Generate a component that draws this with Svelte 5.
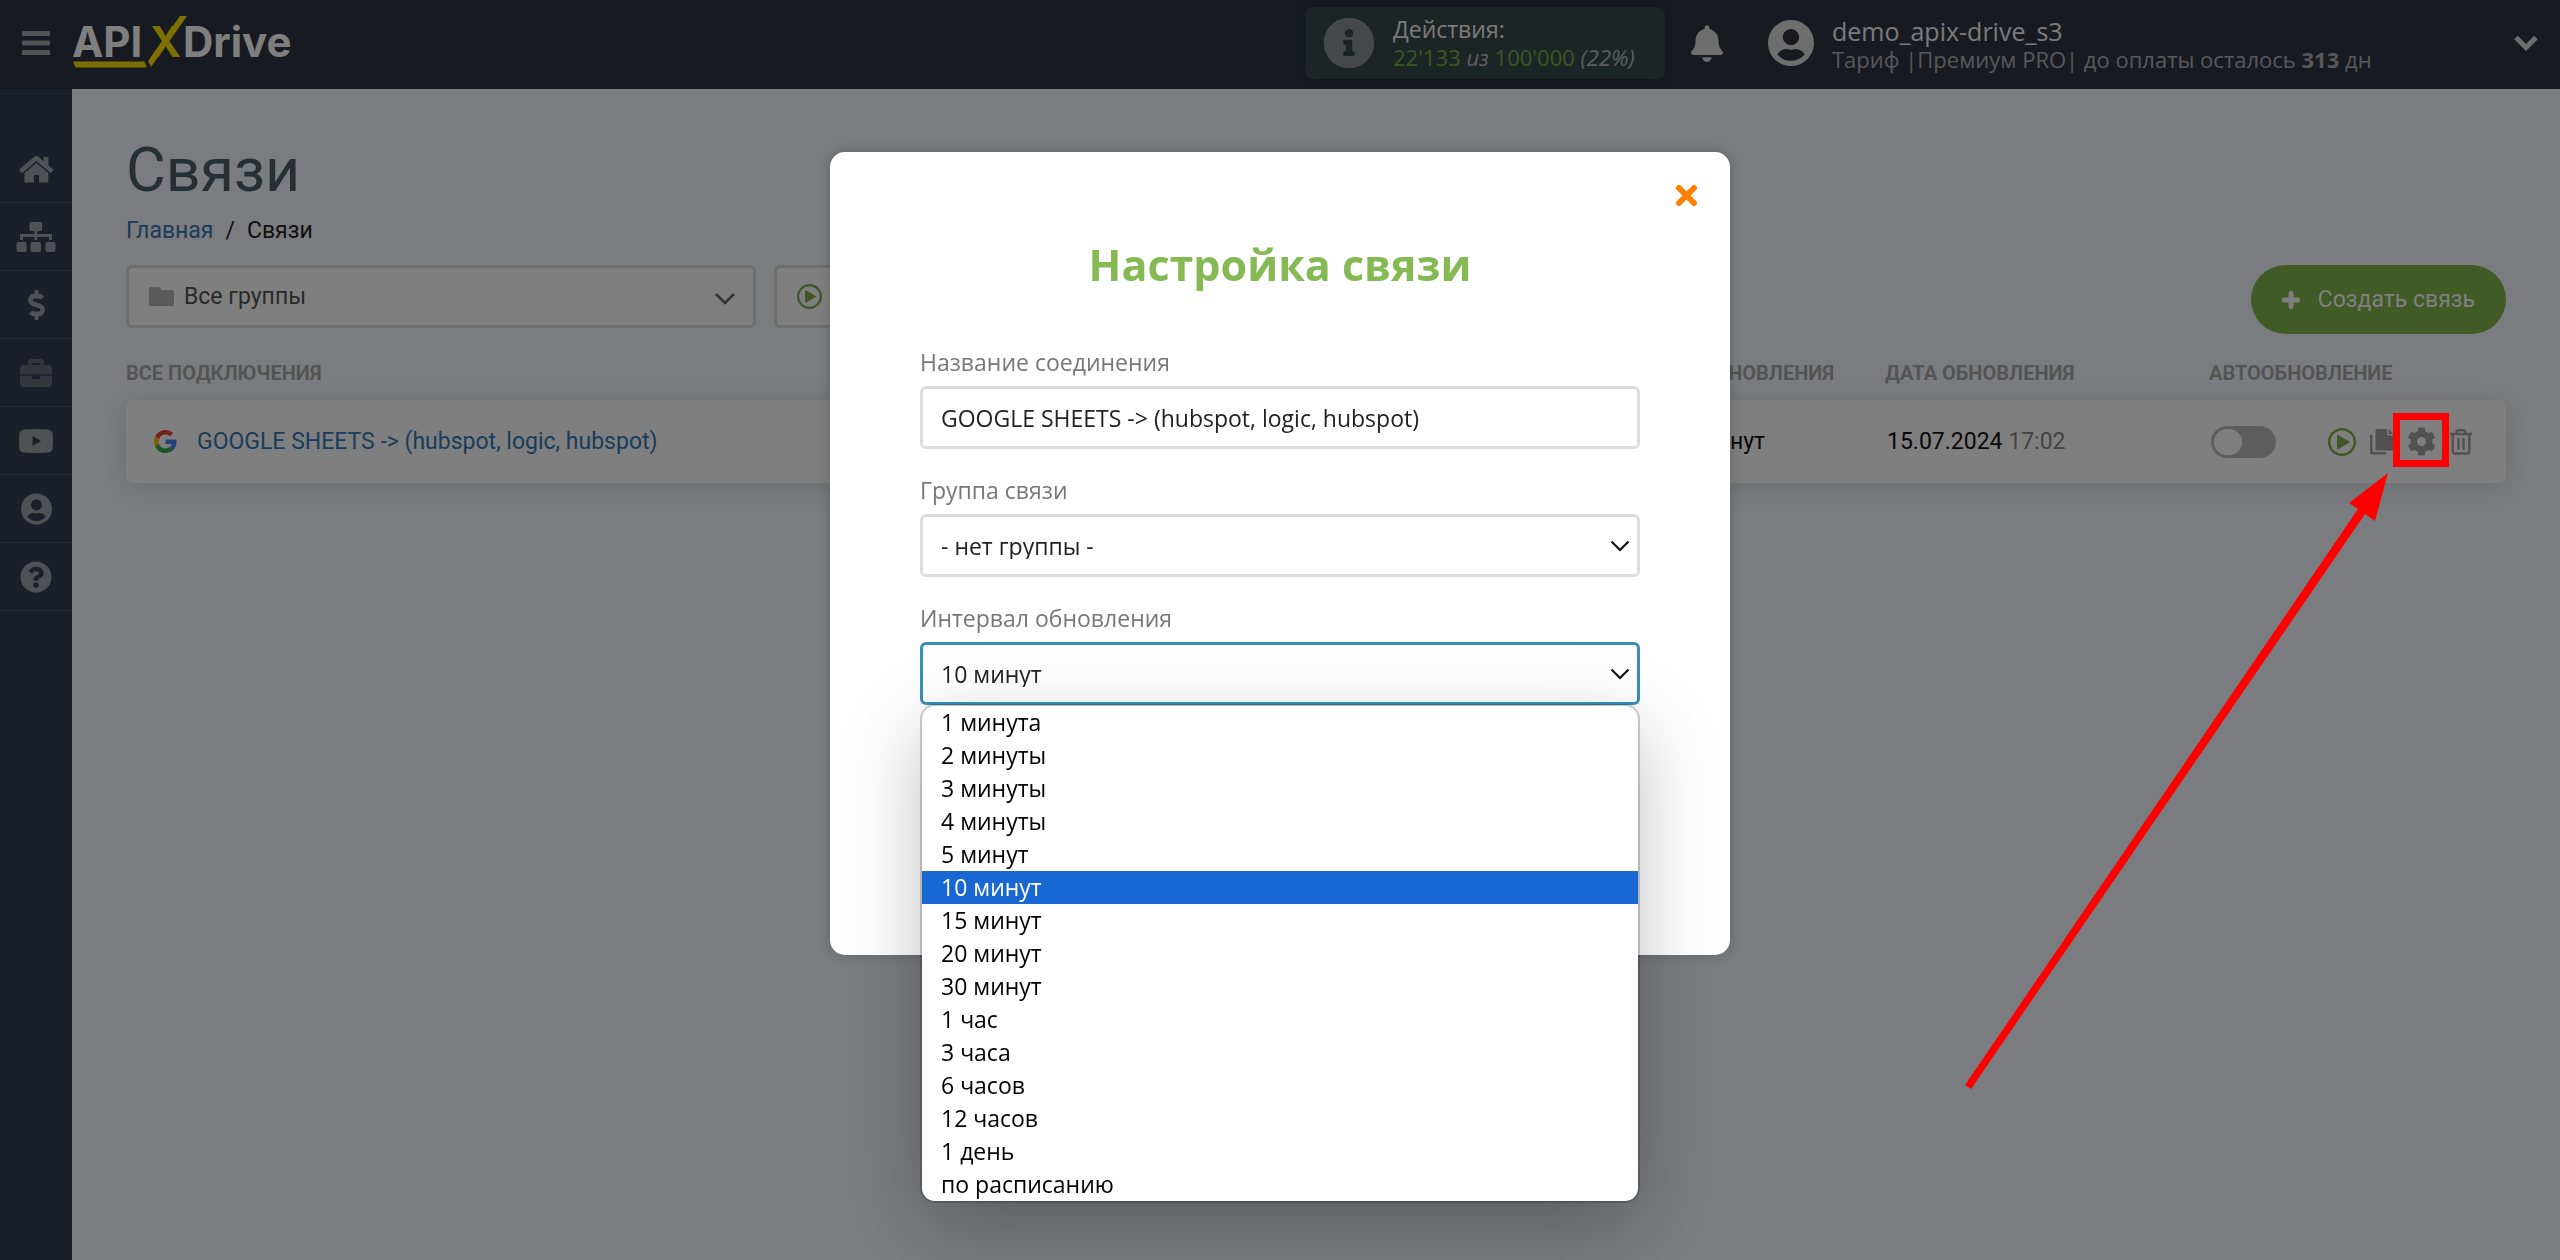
<script>
  let connectionName = $state("GOOGLE SHEETS -> (hubspot, logic, hubspot)")
  let group = $state("none")
  let interval = $state("10 минут")
  let autoUpdate = $state(false)

  const intervals = [
    "1 минута",
    "2 минуты",
    "3 минуты",
    "4 минуты",
    "5 минут",
    "10 минут",
    "15 минут",
    "20 минут",
    "30 минут",
    "1 час",
    "3 часа",
    "6 часов",
    "12 часов",
    "1 день",
    "по расписанию"
  ]

  const userPath = "M248 8C111 8 0 119 0 256s111 248 248 248 248-111 248-248S385 8 248 8zm0 96c48.6 0 88 39.4 88 88s-39.4 88-88 88-88-39.4-88-88 39.4-88 88-88zm0 344c-58.7 0-111.3-26.6-146.5-68.2 18.8-35.4 55.6-59.8 98.5-59.8 2.4 0 4.8.4 7.1 1.1 13 4.2 26.6 6.9 40.9 6.9 14.3 0 28-2.7 40.9-6.9 2.3-.7 4.7-1.1 7.1-1.1 42.9 0 79.7 24.4 98.5 59.8C359.3 421.4 306.7 448 248 448z"
</script>

{#snippet playIcon(size)}
  <svg width={size} height={size} viewBox="0 0 28 28" fill="none">
    <circle cx="14" cy="14" r="12.8" stroke="#7fae4b" stroke-width="2.4" />
    <path d="M9 7.5v13a.6.6 0 0 0 1 .4l11.500-6.500a.5.5 0 0 0 0-.8L10 7.100a.6.6 0 0 0-1 .4z" fill="#7fae4b" />
  </svg>
{/snippet}

<div class="page">
  <header>
    <button class="menu" aria-label="Меню">
      <svg width="28" height="24" viewBox="0 0 28 24" fill="#a3a9ab">
        <rect width="28" height="5" rx="1" />
        <rect y="9.500" width="28" height="5" rx="1" />
        <rect y="19" width="28" height="5" rx="1" />
      </svg>
    </button>
    <a class="logo" href="/" aria-label="APIXDrive">
      <svg width="224" height="56" viewBox="0 0 224 56">
        <text x="-1" y="42" class="logo-text">API</text>
        <text x="77" y="42" class="logo-text logo-x">X</text>
        <text x="110" y="42" class="logo-text">Drive</text>
        <path d="M107 1h7L78 52l-3-6z" fill="#ffdd00" />
        <path d="M0 46.500h71.500l2.500 6H2.500z" fill="#ffdd00" />
      </svg>
    </a>

    <div class="actions-info">
      <svg width="52" height="52" viewBox="0 0 512 512" fill="#8d9395">
        <path d="M256 8C119.043 8 8 119.083 8 256c0 136.997 111.043 248 248 248s248-111.003 248-248C504 119.083 392.957 8 256 8zm0 110c23.196 0 42 18.804 42 42s-18.804 42-42 42-42-18.804-42-42 18.804-42 42-42zm56 254c0 6.627-5.373 12-12 12h-88c-6.627 0-12-5.373-12-12v-24c0-6.627 5.373-12 12-12h12v-64h-12c-6.627 0-12-5.373-12-12v-24c0-6.627 5.373-12 12-12h64c6.627 0 12 5.373 12 12v100h12c6.627 0 12 5.373 12 12v24z" />
      </svg>
      <p>
        Действия:<br />
        <span class="usage"><b>22'133</b> <i>из</i> <b>100'000</b> <i>(22%)</i></span>
      </p>
    </div>

    <button class="bell" aria-label="Уведомления">
      <svg width="32" height="37" viewBox="0 0 448 512" fill="#dcdcdc">
        <path d="M224 512c35.320 0 63.970-28.650 63.970-64H160.030c0 35.350 28.650 64 63.970 64zm215.390-149.710c-19.320-20.760-55.470-51.990-55.470-154.290 0-77.700-54.480-139.900-127.940-155.160V32c0-17.670-14.320-32-31.980-32s-31.980 14.330-31.980 32v20.840C118.560 68.100 64.080 130.300 64.080 208c0 102.300-36.150 133.530-55.470 154.290-6 6.450-8.660 14.160-8.610 21.710.11 16.400 12.980 32 32.100 32h383.800c19.120 0 32-15.600 32.100-32 .05-7.550-2.610-15.270-8.610-21.710z" />
      </svg>
    </button>

    <button class="account">
      <svg width="46" height="48" viewBox="0 0 496 512" fill="#dcdcdc"><path d={userPath} /></svg>
      <span class="account-text">
        <span class="account-name">demo_apix-drive_s3</span>
        <span>Тариф |Премиум PRO| до оплаты осталось <b>313</b> дн</span>
      </span>
      <svg width="24" height="16" viewBox="0 0 24 16" fill="none" stroke="#dcdcdc" stroke-width="5">
        <path d="M2 2.500l10 10 10-10" />
      </svg>
    </button>
  </header>

  <div class="body">
    <nav>
      <a href="/home" aria-label="Главная">
        <svg width="36" height="28" viewBox="0 0 36 28" fill="#9ea5a8">
          <path d="M25.500 2h5v11l-5-4z" />
          <path d="M2.500 16.500L18.300 3l16 13.500" fill="none" stroke="#9ea5a8" stroke-width="4.500" stroke-linejoin="round" />
          <path d="M6.500 18L18.300 8l12 10v8.500a1 1 0 0 1-1 1h-8.300v-7.500h-5v7.500H7.500a1 1 0 0 1-1-1z" />
        </svg>
      </a>
      <a href="/links" aria-label="Связи">
        <svg width="40" height="30" viewBox="0 0 40 30" fill="#9ea5a8">
          <rect x="13.500" width="12.500" height="9" rx="1.500" />
          <rect x=".5" y="20" width="10" height="10" rx="2" />
          <rect x="14.500" y="20" width="10.500" height="10" rx="2" />
          <rect x="29.500" y="20" width="10" height="10" rx="2" />
          <path d="M5.500 18v-4.500h29V18M19.800 8v10" fill="none" stroke="#9ea5a8" stroke-width="3" />
        </svg>
      </a>
      <a href="/billing" aria-label="Оплата">
        <svg width="17" height="30" viewBox="0 0 288 512" fill="#9ea5a8">
          <path d="M209.200 233.400l-108-31.600C88.700 198.200 80 186.500 80 173.500c0-16.300 13.200-29.500 29.500-29.500h66.300c12.200 0 24.200 3.700 34.200 10.500 6.100 4.100 14.300 3.100 19.500-2l34.800-34c7.100-6.900 6.100-18.400-1.800-24.500C238 74.800 207.400 64.100 176 64V16c0-8.800-7.200-16-16-16h-32c-8.800 0-16 7.200-16 16v48h-2.500C45.800 64-5.400 118.700.5 183.600c4.200 46.100 39.400 83.600 83.800 96.600l102.500 30c12.500 3.700 21.200 15.300 21.200 28.300 0 16.300-13.200 29.500-29.500 29.500h-66.300C100 368 88 364.300 78 357.500c-6.100-4.100-14.300-3.100-19.500 2l-34.800 34c-7.100 6.900-6.100 18.400 1.800 24.500 24.500 19.200 55.100 29.900 86.500 30v48c0 8.800 7.200 16 16 16h32c8.800 0 16-7.200 16-16v-48.200c46.600-.9 90.300-28.600 105.700-72.700 21.500-61.600-14.600-124.800-72.500-141.700z" />
        </svg>
      </a>
      <a href="/business" aria-label="Бизнес">
        <svg width="32" height="32" viewBox="0 0 512 512" fill="#666e77">
          <path d="M320 336c0 8.840-7.160 16-16 16h-96c-8.840 0-16-7.160-16-16v-36H0v132c0 25.600 22.400 48 48 48h416c25.600 0 48-22.400 48-48V300H320v36zm144-208h-80V80c0-25.600-22.400-48-48-48H176c-25.600 0-48 22.400-48 48v48H48c-25.600 0-48 22.400-48 48v100h512v-100c0-25.600-22.400-48-48-48zm-144 0H192V96h128v32z" />
        </svg>
      </a>
      <a href="/video" aria-label="Видео">
        <svg width="34" height="24" viewBox="0 0 34 24">
          <path fill="#9ea5a8" fill-rule="evenodd" d="M5 .5Q17-.5 29 .5q4.500.3 4.700 5 .5 6.500 0 13-.2 4.700-4.700 5-12 1-24 0-4.500-.3-4.700-5-.5-6.500 0-13Q.5.8 5 .5zM13.500 7v10l8.500-5z" />
        </svg>
      </a>
      <a href="/profile" aria-label="Профиль">
        <svg width="31" height="32" viewBox="0 0 496 512" fill="#9ea5a8"><path d={userPath} /></svg>
      </a>
      <a href="/help" aria-label="Помощь">
        <svg width="32" height="32" viewBox="0 0 512 512" fill="#9ea5a8">
          <path d="M504 256c0 136.997-111.043 248-248 248S8 392.997 8 256C8 119.083 119.043 8 256 8s248 111.083 248 248zM262.655 90c-54.497 0-89.255 22.957-116.549 63.758-3.536 5.286-2.353 12.415 2.715 16.258l34.699 26.310c5.205 3.947 12.621 3.008 16.665-2.122 17.864-22.658 30.113-35.797 57.303-35.797 20.429 0 45.698 13.148 45.698 32.958 0 14.976-12.363 22.667-32.534 33.976C247.128 238.528 216 254.941 216 296v4c0 6.627 5.373 12 12 12h56c6.627 0 12-5.373 12-12v-1.333c0-28.462 83.186-29.647 83.186-106.667 0-58.002-60.165-102-116.531-102zM256 338c-25.365 0-46 20.635-46 46 0 25.364 20.635 46 46 46s46-20.636 46-46c0-25.365-20.635-46-46-46z" />
        </svg>
      </a>
    </nav>

    <main>
      <h1>Связи</h1>
      <div class="breadcrumb">
        <a href="/home">Главная</a>
        <span>/</span>
        <span>Связи</span>
      </div>

      <div class="toolbar">
        <button class="filter">
          <svg width="25" height="20" viewBox="0 0 25 20" fill="#b4b4b4">
            <path d="M1.500 0H10l3 3h10.500A1.500 1.500 0 0 1 25 4.500v13a1.500 1.500 0 0 1-1.500 1.500h-22A1.500 1.500 0 0 1 0 17.500v-16A1.500 1.500 0 0 1 1.500 0z" />
          </svg>
          <span>Все группы</span>
          <svg width="20" height="16" viewBox="0 0 20 16" fill="none" stroke="#666" stroke-width="2.500">
            <path d="M1 5l9 9 9-9" />
          </svg>
        </button>
        <button class="filter">
          {@render playIcon(25)}
          <span>Все статусы</span>
        </button>
        <button class="create">
          <svg width="18" height="18" viewBox="0 0 18 18" fill="none" stroke="#fff" stroke-width="5" stroke-linecap="round">
            <path d="M9 2.500v13M2.500 9h13" />
          </svg>
          Создать связь
        </button>
      </div>

      <table>
        <colgroup>
          <col />
          <col class="col-interval" />
          <col class="col-date" />
          <col class="col-auto" />
          <col class="col-actions" />
        </colgroup>
        <thead>
          <tr>
            <th>ВСЕ ПОДКЛЮЧЕНИЯ</th>
            <th>ИНТЕРВАЛ ОБНОВЛЕНИЯ</th>
            <th>ДАТА ОБНОВЛЕНИЯ</th>
            <th colspan="2">АВТООБНОВЛЕНИЕ</th>
          </tr>
        </thead>
        <tbody>
          <tr>
            <td>
              <div class="connection">
                <svg width="23" height="23" viewBox="0 0 48 48">
                  <path fill="#ea4335" d="M24 9.500c3.540 0 6.710 1.220 9.210 3.600l6.850-6.850C35.900 2.380 30.470 0 24 0 14.620 0 6.510 5.380 2.560 13.220l7.980 6.190C12.430 13.720 17.740 9.500 24 9.500z" />
                  <path fill="#4285f4" d="M46.980 24.550c0-1.570-.15-3.090-.38-4.550H24v9.020h12.940c-.58 2.960-2.260 5.480-4.780 7.180l7.730 6c4.510-4.180 7.090-10.360 7.090-17.650z" />
                  <path fill="#fbbc05" d="M10.530 28.590A14.500 14.500 0 0 1 9.770 24c0-1.600.27-3.140.76-4.590l-7.980-6.190A23.900 23.900 0 0 0 0 24c0 3.880.92 7.540 2.560 10.780l7.970-6.190z" />
                  <path fill="#34a853" d="M24 48c6.480 0 11.930-2.130 15.890-5.810l-7.730-6c-2.150 1.450-4.920 2.300-8.160 2.300-6.260 0-11.570-4.220-13.470-9.910l-7.980 6.190C6.510 42.620 14.620 48 24 48z" />
                </svg>
                <a href="/connection">{connectionName}</a>
              </div>
            </td>
            <td class="interval">{interval}</td>
            <td>15.07.2024 <span class="time">17:02</span></td>
            <td>
              <input class="switch" type="checkbox" aria-label="Автообновление" bind:checked={autoUpdate} />
            </td>
            <td>
              <div class="row-actions">
                <button aria-label="Запустить">{@render playIcon(28)}</button>
                <button aria-label="Копировать">
                  <svg width="24" height="26" viewBox="0 0 24 26" fill="#a3a3a3">
                    <path d="M0 6h2.500v17H16v2.500H2a2 2 0 0 1-2-2z" />
                    <path d="M7 0h10v6.500h6V20a1.500 1.500 0 0 1-1.500 1.500H7A1.500 1.500 0 0 1 5.500 20V1.500A1.500 1.500 0 0 1 7 0z" />
                    <path d="M18.500 0L23 5h-4.500z" />
                  </svg>
                </button>
                <div class="settings">
                  <button aria-label="Настройки">
                    <svg width="29" height="29" viewBox="0 0 512 512" fill="#a3a3a3">
                      <path d="M487.400 315.700l-42.600-24.600c4.300-23.200 4.300-47 0-70.200l42.600-24.600c4.900-2.800 7.100-8.600 5.500-14-11.100-35.600-30-67.800-54.700-94.600-3.800-4.100-10-5.100-14.800-2.300L380.800 110c-17.900-15.400-38.500-27.300-60.800-35.100V25.800c0-5.600-3.900-10.500-9.400-11.700-36.700-8.200-74.300-7.800-109.200 0-5.500 1.200-9.400 6.100-9.400 11.700V75c-22.200 7.900-42.800 19.800-60.800 35.100L88.700 85.500c-4.900-2.800-11-1.900-14.800 2.300-24.700 26.700-43.600 58.900-54.700 94.600-1.700 5.400.6 11.200 5.500 14L67.300 221c-4.300 23.200-4.300 47 0 70.200l-42.600 24.600c-4.900 2.800-7.100 8.600-5.500 14 11.100 35.600 30 67.800 54.700 94.600 3.800 4.100 10 5.100 14.800 2.300l42.600-24.600c17.900 15.400 38.500 27.300 60.800 35.100v49.200c0 5.600 3.900 10.500 9.400 11.700 36.700 8.200 74.300 7.800 109.200 0 5.500-1.200 9.400-6.100 9.400-11.700v-49.200c22.200-7.900 42.800-19.800 60.800-35.100l42.600 24.600c4.900 2.800 11 1.900 14.800-2.300 24.700-26.700 43.600-58.900 54.700-94.600 1.500-5.500-.7-11.300-5.600-14.100zM256 336c-44.100 0-80-35.900-80-80s35.900-80 80-80 80 35.900 80 80-35.900 80-80 80z" />
                    </svg>
                  </button>
                  <div class="highlight"></div>
                  <svg class="arrow" width="424" height="616" viewBox="0 0 424 616" fill="#f00">
                    <path d="M423 0L384 30l9 6L0 612l6 4L400 41l10 7z" />
                  </svg>
                </div>
                <button aria-label="Удалить">
                  <svg width="22" height="26" viewBox="0 0 22 26" fill="none" stroke="#a3a3a3" stroke-width="2.400">
                    <path d="M0 5h22M6.500 5V3a2 2 0 0 1 2-1.800h5a2 2 0 0 1 2 1.800v2M2.700 5v17.500a2 2 0 0 0 2 2h12.600a2 2 0 0 0 2-2V5M8.500 9v12M13.500 9v12" />
                  </svg>
                </button>
              </div>
            </td>
          </tr>
        </tbody>
      </table>
    </main>
  </div>
</div>

<div class="overlay">
  <div class="modal" role="dialog" aria-labelledby="modal-title">
    <button class="close" aria-label="Закрыть">
      <svg width="23" height="23" viewBox="0 0 23 23" fill="none" stroke="#ff8000" stroke-width="6" stroke-linecap="round">
        <path d="M4 4l15 15M19 4L4 19" />
      </svg>
    </button>
    <h2 id="modal-title">Настройка связи</h2>

    <div class="field">
      <label for="name">Название соединения</label>
      <input id="name" type="text" bind:value={connectionName} />
    </div>

    <div class="field">
      <label for="group">Группа связи</label>
      <div class="select">
        <select id="group" bind:value={group}>
          <option value="none">- нет группы -</option>
        </select>
        <svg width="20" height="12" viewBox="0 0 20 12" fill="none" stroke="#111" stroke-width="2.200">
          <path d="M1.500 1.500L10 10l8.500-8.500" />
        </svg>
      </div>
    </div>

    <div class="field">
      <label for="interval">Интервал обновления</label>
      <div class="select open">
        <select id="interval" bind:value={interval}>
          {#each intervals as item}
            <option>{item}</option>
          {/each}
        </select>
        <svg width="20" height="12" viewBox="0 0 20 12" fill="none" stroke="#111" stroke-width="2.200">
          <path d="M1.500 1.500L10 10l8.500-8.500" />
        </svg>
        <ul role="listbox" aria-label="Интервал обновления">
          {#each intervals as item}
            <li role="option" aria-selected={item === interval} class:selected={item === interval}>{item}</li>
          {/each}
        </ul>
      </div>
    </div>
  </div>
</div>

<style>
  :global(body) {
    background-color: #f6f8fe;
  }

  .page,
  .overlay {
    font-family: Roboto, "Liberation Sans", sans-serif;
    font-size: 23px;
    line-height: 26px;
    color: #222;
  }

  .page *,
  .overlay * {
    box-sizing: border-box;
  }

  .page {
    display: flex;
    flex-direction: column;
    min-height: 100vh;
  }

  button {
    display: flex;
    align-items: center;
    padding: 0;
    border: none;
    background: none;
    font: inherit;
    color: inherit;
    cursor: pointer;
  }

  a {
    color: #337ab7;
    text-decoration: none;
  }

  svg {
    display: block;
    flex: none;
  }

  header {
    display: flex;
    align-items: center;
    height: 89px;
    padding: 0 22px 3px;
    background-color: #2e3642;
    font-family: "Open Sans", "Noto Sans", sans-serif;
    line-height: 28px;
    color: #aeb1b5;
  }

  .logo {
    margin-left: 23px;
  }

  .logo-text {
    font-family: Inter, sans-serif;
    font-size: 42px;
    font-weight: 700;
    fill: #fff;
  }

  .logo-x {
    fill: #fd0;
  }

  .actions-info {
    display: flex;
    align-items: center;
    gap: 18px;
    width: 360px;
    height: 72px;
    margin-left: auto;
    padding: 0 18px;
    border-radius: 8px;
    background-color: #3b494d;
    box-shadow: 0 0 8px rgba(0, 0, 0, .2);
    color: #f4f4f4;
  }

  .actions-info p {
    margin: 0;
    white-space: nowrap;
  }

  .usage {
    font-size: 22px;
    color: #b9bcbf;
  }

  .usage b {
    color: #76ae43;
    font-weight: 400;
  }

  .bell {
    margin-left: 26px;
  }

  .account {
    gap: 18px;
    width: 770px;
    margin-left: 45px;
    font-size: 22px;
    text-align: left;
  }

  .account-text {
    display: flex;
    flex-direction: column;
    flex: 1;
    padding-top: 4px;
    white-space: nowrap;
  }

  .account-name {
    font-size: 25px;
    color: #f4f4f4;
  }

  .body {
    display: flex;
    flex: 1;
  }

  nav {
    width: 72px;
    padding-top: 46px;
    background-color: #363e52;
  }

  nav a {
    display: flex;
    align-items: center;
    justify-content: center;
    height: 68px;
    border-bottom: 1px solid #4e566a;
  }

  main {
    flex: 1;
    padding: 46px 54px;
  }

  h1 {
    margin: 0 0 13px;
    font-size: 61px;
    line-height: 70px;
    font-weight: 400;
    color: #4b5f68;
  }

  .breadcrumb {
    display: flex;
    gap: 12px;
    margin-bottom: 21px;
  }

  .toolbar {
    display: flex;
    align-items: flex-start;
    gap: 18px;
  }

  .filter {
    gap: 10px;
    width: 630px;
    height: 63px;
    padding: 0 18px 0 20px;
    border: 3px solid #dcdcdc;
    border-radius: 6px;
    background-color: #fff;
    color: #555;
  }

  .filter span {
    flex: 1;
    text-align: left;
  }

  .create {
    gap: 18px;
    height: 69px;
    margin-left: auto;
    padding: 0 31px;
    border-radius: 35px;
    background-color: #81b64c;
    color: #fff;
  }

  table {
    width: 100%;
    margin-top: 27px;
    border-spacing: 0;
    table-layout: fixed;
  }

  .col-interval {
    width: 293px;
  }

  .col-date {
    width: 324px;
  }

  .col-auto {
    width: 117px;
  }

  .col-actions {
    width: 180px;
  }

  th {
    padding: 0 0 15px;
    font-size: 20px;
    line-height: 24px;
    font-weight: 700;
    text-align: left;
    color: #a9a9a9;
  }

  tbody tr {
    border-radius: 8px;
    box-shadow: 0 4px 24px rgba(0, 0, 0, .12);
  }

  td {
    height: 83px;
    padding: 0 2px;
    background-color: #fff;
    color: #111;
  }

  td:first-child {
    border-radius: 8px 0 0 8px;
  }

  td:last-child {
    border-radius: 0 8px 8px 0;
  }

  .connection {
    display: flex;
    align-items: center;
    gap: 20px;
    padding-left: 26px;
  }

  .interval {
    padding-left: 76px;
  }

  .time {
    color: #888;
  }

  .switch {
    display: block;
    width: 65px;
    height: 32px;
    margin: 0;
    padding: 3px;
    appearance: none;
    border-radius: 16px;
    background-color: #bdbdbd;
  }

  .switch::before {
    content: "";
    display: block;
    width: 28px;
    height: 26px;
    border-radius: 14px;
    background-color: #fff;
  }

  .row-actions {
    display: flex;
    align-items: center;
    justify-content: space-between;
    padding-right: 32px;
  }

  .settings {
    position: relative;
  }

  .highlight {
    position: absolute;
    z-index: 20;
    top: -14px;
    left: -14px;
    width: 56px;
    height: 54px;
    border: 7px solid #f00;
    pointer-events: none;
  }

  .arrow {
    position: absolute;
    z-index: 20;
    top: 46px;
    right: 47px;
    pointer-events: none;
  }

  .overlay {
    position: fixed;
    inset: 0;
    z-index: 10;
    display: flex;
    align-items: flex-start;
    justify-content: center;
    padding-top: 152px;
    background-color: rgba(0, 0, 0, .5);
    font-family: "Open Sans", "Noto Sans", sans-serif;
  }

  .modal {
    display: flex;
    flex-direction: column;
    gap: 28px;
    width: 900px;
    padding: 32px 90px 250px;
    border-radius: 15px;
    background-color: #fff;
    box-shadow: 0 0 15px rgba(0, 0, 0, .2);
  }

  .close {
    align-self: flex-end;
    margin-right: -58px;
  }

  h2 {
    margin: 0 0 26px;
    font-size: 43px;
    line-height: 60px;
    font-weight: 700;
    text-align: center;
    color: #85b954;
  }

  .field {
    display: flex;
    flex-direction: column;
    gap: 11px;
  }

  label {
    color: #777;
  }

  .field input,
  select {
    width: 100%;
    height: 63px;
    padding: 0 18px;
    border: 3px solid #ddd;
    border-radius: 6px;
    background-color: #fff;
    font: inherit;
    color: #222;
  }

  select {
    appearance: none;
  }

  .select {
    position: relative;
    display: grid;
    align-items: center;
  }

  .select svg {
    position: absolute;
    right: 10px;
    pointer-events: none;
  }

  .open select {
    border-color: #3690b8;
  }

  ul {
    position: absolute;
    top: 64px;
    left: 2px;
    right: 2px;
    margin: 0;
    padding: 0;
    overflow: hidden;
    border-radius: 13px;
    background-color: #fff;
    box-shadow: 0 0 0 2px rgba(0, 0, 0, .18), 0 24px 80px rgba(0, 0, 0, .25);
    list-style: none;
    color: #000;
  }

  li {
    padding: 0 19px;
    line-height: 33px;
  }

  .selected {
    background-color: #1967d2;
    color: #fff;
  }
</style>
